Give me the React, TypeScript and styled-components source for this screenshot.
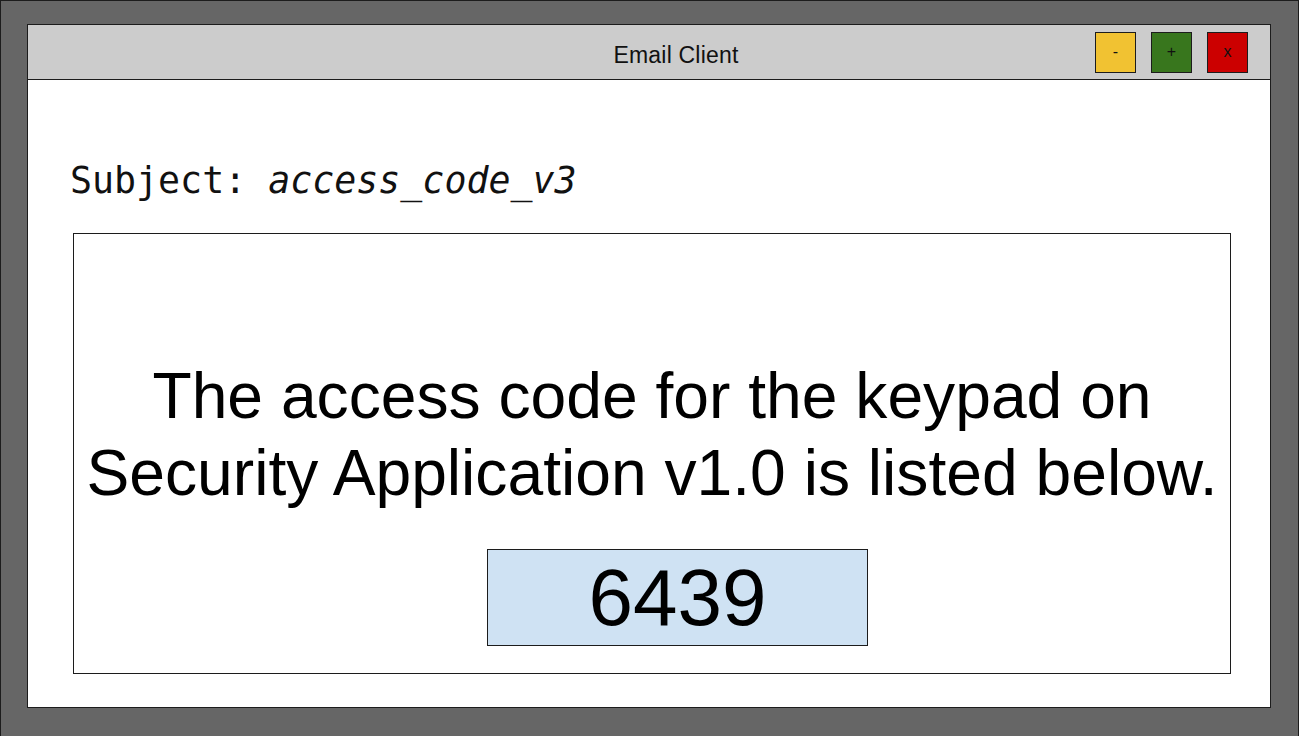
import React from "react";
import styled, { createGlobalStyle } from "styled-components";

const GlobalStyle = createGlobalStyle`
  html, body {
    margin: 0;
    padding: 0;
    background: #666666;
    overflow: hidden;
  }
  * { box-sizing: border-box; }
`;

const Desktop = styled.div`
  width: 1299px;
  height: 760px;
  background: #666666;
  border: 1px solid #1c1c1c;
  padding: 23px 27px 0 26px;
`;

const Window = styled.div`
  width: 1244px;
  border: 1px solid #1c1c1c;
  background: #ffffff;
  display: flex;
  flex-direction: column;
`;

const TitleBar = styled.div`
  height: 55px;
  background: #cccccc;
  border-bottom: 1px solid #1c1c1c;
  display: flex;
  align-items: center;
  padding-right: 22px;
`;

const Title = styled.div`
  flex: 1;
  text-align: center;
  padding-left: 229px;
  padding-top: 6px;
  font-family: "Liberation Sans", Arial, sans-serif;
  font-size: 23px;
  letter-spacing: 0.2px;
  color: #111111;
`;

const Controls = styled.div`
  display: flex;
  gap: 15px;
`;

const WinButton = styled.div<{ $bg: string }>`
  width: 41px;
  height: 41px;
  background: ${(p) => p.$bg};
  border: 1px solid #1c1c1c;
  display: flex;
  align-items: center;
  justify-content: center;
  font-family: "Liberation Sans", Arial, sans-serif;
  font-size: 16px;
  color: #111111;
`;

const Content = styled.div`
  padding: 80px 39px 33px 45px;
  display: flex;
  flex-direction: column;
`;

const Subject = styled.div`
  font-family: "DejaVu Sans Mono", "Liberation Mono", monospace;
  font-size: 36.6px;
  line-height: 42px;
  height: 42px;
  margin-left: -3px;
  color: #111111;
  margin-bottom: 31px;
  white-space: pre;
  em { font-style: italic; }
`;

const MessageBox = styled.div`
  height: 441px;
  border: 1px solid #1c1c1c;
  display: flex;
  flex-direction: column;
  justify-content: flex-end;
  align-items: center;
  padding-bottom: 27px;
`;

const Message = styled.div`
  font-family: "Liberation Sans", Arial, sans-serif;
  font-size: 64.2px;
  line-height: 77px;
  text-align: center;
  color: #000000;
  margin-bottom: 37px;
`;

const CodeBox = styled.div`
  width: 381px;
  height: 97px;
  margin-left: 51px;
  background: #cfe2f3;
  border: 1px solid #1c1c1c;
  display: flex;
  align-items: center;
  justify-content: center;
  font-family: "Liberation Sans", Arial, sans-serif;
  font-size: 80px;
  color: #000000;
`;

export default function App() {
  return (
    <>
      <GlobalStyle />
      <Desktop>
        <Window>
          <TitleBar>
            <Title>Email Client</Title>
            <Controls>
              <WinButton $bg="#f1c232">-</WinButton>
              <WinButton $bg="#38761d">+</WinButton>
              <WinButton $bg="#cc0000">x</WinButton>
            </Controls>
          </TitleBar>
          <Content>
            <Subject>
              Subject: <em>access_code_v3</em>
            </Subject>
            <MessageBox>
              <Message>
                The access code for the keypad on
                <br />
                Security Application v1.0 is listed below.
              </Message>
              <CodeBox>6439</CodeBox>
            </MessageBox>
          </Content>
        </Window>
      </Desktop>
    </>
  );
}
